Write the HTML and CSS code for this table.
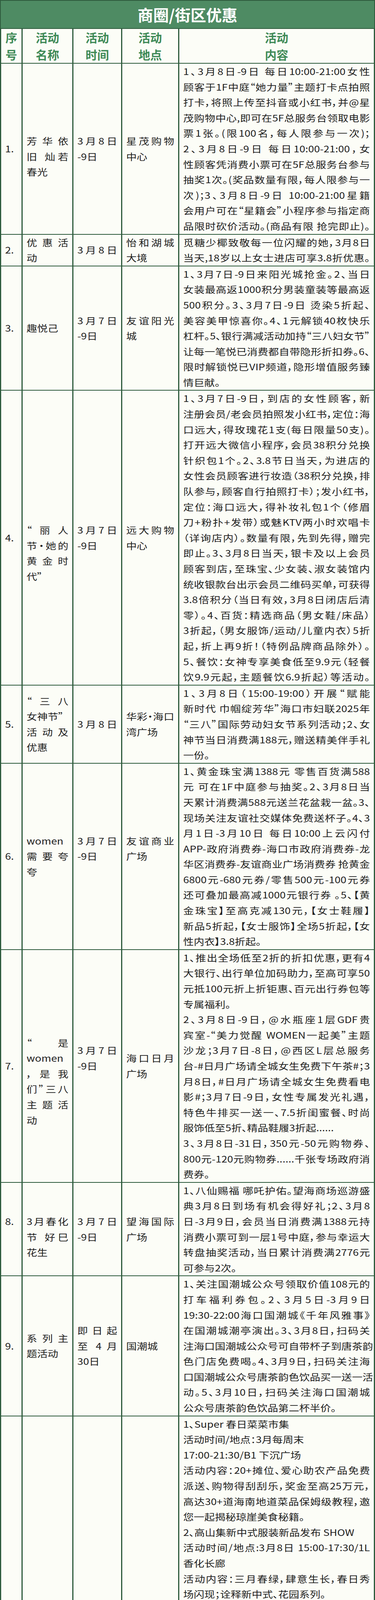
FILE: index.html
```html
<!DOCTYPE html>
<html lang="zh-CN">
<head>
<meta charset="utf-8">
<title>商圈/街区优惠</title>
<link rel="stylesheet" href="styles.css">
</head>
<body>
<div class="sheet">
  <div class="title">商圈/街区优惠</div>
  <table class="grid">
    <colgroup><col class="c-no"><col class="c-name"><col class="c-time"><col class="c-place"><col class="c-text"></colgroup>
    <thead>
      <tr><th>序<br>号</th><th>活动<br>名称</th><th>活动<br>时间</th><th>活动<br>地点</th><th>活动<br>内容</th></tr>
    </thead>
    <tbody>
      <tr>
        <td class="no"><span class="l">1.</span></td>
        <td class="pt1"><span class="l j">芳华依</span><span class="l j">旧 灿若</span><span class="l">春光</span></td>
        <td><span class="l j">3月8日</span><span class="l">-9日</span></td>
        <td><span class="l j">星茂购物</span><span class="l">中心</span></td>
        <td>
          <span class="l j">1、3月8日-9日 每日10:00-21:00女性</span>
          <span class="l j">顾客于1F中庭“她力量”主题打卡点拍照</span>
          <span class="l j">打卡，将照上传至抖音或小红书，并@星</span>
          <span class="l j">茂购物中心,即可在5F总服务台领取电影</span>
          <span class="l j">票1张。(限100名，每人限参与一次)；</span>
          <span class="l j">2、3月8日-9日 每日10:00-21:00，女</span>
          <span class="l j">性顾客凭消费小票可在5F总服务台参与</span>
          <span class="l j">抽奖1次。(奖品数量有限，每人限参与一</span>
          <span class="l j">次)；3、3月8日-9日 10:00-21:00星籍</span>
          <span class="l j">会用户可在“星籍会”小程序参与指定商</span>
          <span class="l j">品限时砍价活动。(商品有限 抢完即止)。</span>
        </td>
      </tr>
      <tr>
        <td class="no"><span class="l">2.</span></td>
        <td><span class="l j">优惠活</span><span class="l">动</span></td>
        <td><span class="l j">3月8日</span></td>
        <td><span class="l j">怡和湖城</span><span class="l">大境</span></td>
        <td>
          <span class="l j">觅糖少椰致敬每一位闪耀的她，3月8日</span>
          <span class="l j">当天,18岁以上女士进店可享3.8折优惠。</span>
        </td>
      </tr>
      <tr>
        <td class="no"><span class="l">3.</span></td>
        <td><span class="l">趣悦己</span></td>
        <td><span class="l j">3月7日</span><span class="l">-9日</span></td>
        <td><span class="l j">友谊阳光</span><span class="l">城</span></td>
        <td>
          <span class="l j">1、3月7日-9日来阳光城抢金。2、当日</span>
          <span class="l j">女装最高返1000积分男装童装等最高返</span>
          <span class="l j">500积分。3、3月7日-9日 烫染5折起、</span>
          <span class="l j">美容美甲惊喜你。4、1元解锁40枚快乐</span>
          <span class="l j">杠杆。5、银行满减活动加持“三八妇女节”</span>
          <span class="l j">让每一笔悦已消费都自带隐形折扣券。6、</span>
          <span class="l j">限时解锁悦已VIP频道，隐形增值服务臻</span>
          <span class="l">情巨献。</span>
        </td>
      </tr>
      <tr>
        <td class="no"><span class="l">4.</span></td>
        <td class="pt2"><span class="l j">“丽人</span><span class="l j">节·她的</span><span class="l j">黄金时</span><span class="l">代”</span></td>
        <td><span class="l j">3月7日</span><span class="l">-9日</span></td>
        <td><span class="l j">远大购物</span><span class="l">中心</span></td>
        <td>
          <span class="l j">1、3月7日-9日，到店的女性顾客，新</span>
          <span class="l j">注册会员/老会员拍照发小红书，定位：海</span>
          <span class="l j">口远大，得玫瑰花1支(每日限量50支)。</span>
          <span class="l j">打开远大微信小程序，会员38积分兑换</span>
          <span class="l j">针织包1个。2、3.8节日当天，为进店的</span>
          <span class="l j">女性会员顾客进行妆造（38积分兑换，排</span>
          <span class="l j">队参与，顾客自行拍照打卡）；发小红书，</span>
          <span class="l j">定位：海口远大，得补妆礼包1个（修眉</span>
          <span class="l j">刀+粉扑+发带）或魅KTV两小时欢唱卡</span>
          <span class="l j">（详询店内）。数量有限，先到先得，赠完</span>
          <span class="l j">即止。3、3月8日当天，银卡及以上会员</span>
          <span class="l j">顾客到店，至珠宝、少女装、淑女装馆内</span>
          <span class="l j">统收银款台出示会员二维码买单，可获得</span>
          <span class="l j">3.8倍积分（当日有效，3月8日闭店后清</span>
          <span class="l j">零）。4、百货：精选商品（男女鞋/床品）</span>
          <span class="l j">3折起，（男女服饰/运动/儿童内衣）5折</span>
          <span class="l j">起，折上再9折！（特例品牌商品除外）。</span>
          <span class="l j">5、餐饮：女神专享美食低至9.9元（轻餐</span>
          <span class="l j">饮9.9元起，主题餐饮6.9折起）等活动。</span>
        </td>
      </tr>
      <tr>
        <td class="no"><span class="l">5.</span></td>
        <td><span class="l j">“三八</span><span class="l">女神节”</span><span class="l j">活动及</span><span class="l">优惠</span></td>
        <td><span class="l j">3月8日</span></td>
        <td><span class="l j">华彩·海口</span><span class="l">湾广场</span></td>
        <td>
          <span class="l j">1、3月8日（15:00-19:00）开展“赋能</span>
          <span class="l j">新时代 巾帼绽芳华”海口市妇联2025年</span>
          <span class="l j">“三八”国际劳动妇女节系列活动；2、女</span>
          <span class="l j">神节当日消费满188元，赠送精美伴手礼</span>
          <span class="l">一份。</span>
        </td>
      </tr>
      <tr>
        <td class="no"><span class="l">6.</span></td>
        <td><span class="l">women</span><span class="l j">需要夸</span><span class="l">夸</span></td>
        <td class="pb1"><span class="l j">3月7日</span><span class="l">-9日</span></td>
        <td class="pb1"><span class="l j">友谊商业</span><span class="l">广场</span></td>
        <td>
          <span class="l j">1、黄金珠宝满1388元 零售百货满588</span>
          <span class="l j">元 可在1F中庭参与抽奖。2、3月8日当</span>
          <span class="l j">天累计消费满588元送兰花盆栽一盆。3、</span>
          <span class="l j">现场关注友谊社交媒体免费送杯子。4、3</span>
          <span class="l j">月1日-3月10日 每日10:00上云闪付</span>
          <span class="l j">APP-政府消费券-海口市政府消费券-龙</span>
          <span class="l j">华区消费券-友谊商业广场消费券 抢黄金</span>
          <span class="l j">6800元-680元券/零售500元-100元券</span>
          <span class="l j">还可叠加最高减1000元银行券 。5、【黄</span>
          <span class="l j">金珠宝】至高克减130元，【女士鞋履】</span>
          <span class="l j">新品5折起，【女士服饰】全场5折起，【女</span>
          <span class="l">性内衣】3.8折起。</span>
        </td>
      </tr>
      <tr>
        <td class="no"><span class="l">7.</span></td>
        <td class="pt2"><span class="l j">“是</span><span class="l">women</span><span class="l j">，是我</span><span class="l j">们”三八</span><span class="l j">主题活</span><span class="l">动</span></td>
        <td class="pb1"><span class="l j">3月7日</span><span class="l">-9日</span></td>
        <td><span class="l j">海口日月</span><span class="l">广场</span></td>
        <td>
          <span class="l j">1、推出全场低至2折的折扣优惠，更有4</span>
          <span class="l j">大银行、出行单位加码助力，至高可享50</span>
          <span class="l j">元抵100元折上折钜惠、百元出行券包等</span>
          <span class="l">专属福利。</span>
          <span class="l j">2、3月8日-9日，@水瓶座1层GDF贵</span>
          <span class="l j">宾室-“美力觉醒 WOMEN一起美”主题</span>
          <span class="l j">沙龙；3月7日-8日，@西区L层总服务</span>
          <span class="l j">台-#日月广场请全城女生免费下午茶#；3</span>
          <span class="l j">月8日，#日月广场请全城女生免费看电</span>
          <span class="l j">影#；3月7日-9日，女性专属发光礼遇，</span>
          <span class="l j">特色牛排买一送一、7.5折闺蜜餐、时尚</span>
          <span class="l">服饰低至5折、精品鞋履3折起......</span>
          <span class="l j">3、3月8日-31日，350元-50元购物券、</span>
          <span class="l j">800元-120元购物券......千张专场政府消</span>
          <span class="l">费券。</span>
        </td>
      </tr>
      <tr>
        <td class="no pb1"><span class="l">8.</span></td>
        <td class="pt1"><span class="l j">3月春化</span><span class="l j">节 好巳</span><span class="l">花生</span></td>
        <td><span class="l j">3月7日</span><span class="l">-9日</span></td>
        <td><span class="l j">望海国际</span><span class="l">广场</span></td>
        <td>
          <span class="l j">1、八仙赐福 哪吒护佑。望海商场巡游盛</span>
          <span class="l j">典3月8日到场有机会得好礼；2、3月8</span>
          <span class="l j">日-3月9日，会员当日消费满1388元持</span>
          <span class="l j">消费小票可到一层1号中庭，参与幸运大</span>
          <span class="l j">转盘抽奖活动，当日累计消费满2776元</span>
          <span class="l">可参与2次。</span>
        </td>
      </tr>
      <tr>
        <td class="no"><span class="l">9.</span></td>
        <td><span class="l j">系列主</span><span class="l">题活动</span></td>
        <td><span class="l j">即日起</span><span class="l j">至 4 月</span><span class="l">30日</span></td>
        <td><span class="l">国潮城</span></td>
        <td>
          <span class="l j">1、关注国潮城公众号领取价值108元的</span>
          <span class="l j">打车福利券包。2、3月5日-3月9日</span>
          <span class="l j">19:30-22:00海口国潮城《千年风雅事》</span>
          <span class="l j">在国潮城潮亭演出。3、3月8日，扫码关</span>
          <span class="l j">注海口国潮城公众号可自带杯子到唐茶韵</span>
          <span class="l j">色门店免费喝。4、3月9日，扫码关注海</span>
          <span class="l j">口国潮城公众号唐茶韵色饮品买一送一活</span>
          <span class="l j">动。5、3月10日，扫码关注海口国潮城</span>
          <span class="l">公众号唐茶韵色饮品第二杯半价。</span>
        </td>
      </tr>
      <tr>
        <td class="no"><span class="l">10.</span></td>
        <td><span class="l j">系列主</span><span class="l j">题活动</span><span class="l">及优惠</span></td>
        <td><span class="l j">3月5日</span><span class="l">-3月11</span><span class="l">日</span></td>
        <td><span class="l j">王府井海</span><span class="l">垦广场</span></td>
        <td>
          <span class="l">1、Super 春日菜菜市集</span>
          <span class="l">活动时间/地点：3月每周末</span>
          <span class="l">17:00-21:30/B1 下沉广场</span>
          <span class="l j">活动内容：20+摊位、爱心助农产品免费</span>
          <span class="l j">派送、购物得刮刮乐，奖金至高25万元，</span>
          <span class="l j">高达30+道海南地道菜品保姆级教程，邀</span>
          <span class="l">您一起揭秘琼崖美食秘籍。</span>
          <span class="l">2、高山集新中式服装新品发布 SHOW</span>
          <span class="l j">活动时间/地点:3月8日 15:00-17:30/1L</span>
          <span class="l">香化长廊</span>
          <span class="l j">活动内容：三月春绿，肆意生长，春日秀</span>
          <span class="l">场闪现；诠释新中式、花园系列。</span>
          <span class="l">3、Super 春日菜菜市集·音乐会</span>
          <span class="l">活动时间/地点：3月8日</span>
          <span class="l">19:30-21:30/B1 下沉广场</span>
          <span class="l j">活动内容：一场专属春天的音乐会，就在</span>
          <span class="l">这周六，唱一唱美好的春天！</span>
          <span class="l j">4、2025 第二十四届海口冼夫人文化节巾</span>
          <span class="l">帼主题巡游快闪活动</span>
          <span class="l">巡游时间：3月9日</span>
          <span class="l j">活动内容：3月5日-3 月11日期间凭东</span>
          <span class="l j">坡镇冼夫人纪念馆门票的游客，到王府井</span>
          <span class="l j">海垦广场一楼总服务台，注册会员可免费</span>
          <span class="l">领取鸭鸭手腕包一个 。</span>
          <span class="l j">5、国际美妆春日限定满减：即日起至3</span>
          <span class="l j">月9日，满1000元减 200 元；满2000</span>
          <span class="l">元减440元；满3000元减690元。</span>
          <span class="l">6、美力满赠活动</span>
          <span class="l">活动时间：3月1日-3 月9日</span>
          <span class="l j">活动内容：零售单笔消费实付满1688元</span>
          <span class="l j">送欧舒丹护手霜/欧舒丹润唇膏（2选1）。</span>
          <span class="l">*具体参与品牌详见店内。</span>
        </td>
      </tr>
      <tr>
        <td class="no"><span class="l">11.</span></td>
        <td><span class="l j">致敬</span><span class="l j">“她”力</span><span class="l j">量，3月</span><span class="l j">8日「花</span><span class="l j">花/手作/</span><span class="l j">美照」三</span><span class="l">连彩蛋</span></td>
        <td><span class="l j">3月8日</span></td>
        <td><span class="l j">恩祥生活</span><span class="l">广场</span></td>
        <td>
          <span class="l j">领毛绒小花，GET打卡拍照神器；享DIY</span>
          <span class="l j">体验，把春天扭进你心里；拍春日神图，</span>
          <span class="l">现场打印+贴纸装饰。</span>
          <span class="l">地址：海口市秀英区美林路5号</span>
          <span class="l">电话：0898-68610168</span>
        </td>
      </tr>
      <tr>
        <td class="no"><span class="l">12.</span></td>
        <td><span class="l j">主题活</span><span class="l">动</span></td>
        <td><span class="l j">3月8日</span><span class="l">-9日</span></td>
        <td><span class="l j">海口万达</span><span class="l">广场</span></td>
        <td>
          <span class="l j">活动一、3月8日-9日，1F连廊，首届脑</span>
          <span class="l j">力挑战赛；活动二、3月8日，一号门外</span>
          <span class="l j">广场，首届Chinajoy韩舞；活动三、3月</span>
          <span class="l j">8日-9日，1F连廊，首届萌宠游园会；活</span>
          <span class="l j">动四、3月8日-9日，1F连廊，春日FAFA</span>
          <span class="l j">艺术节；活动五、3月8日-9日，1F连廊，</span>
          <span class="l j">趣味魔方比赛；活动六、3月8日-9日，</span>
          <span class="l j">惊喜玩偶派对；活动七、3月8日-9日，</span>
          <span class="l j">1F连廊，粉丝线下联动；活动八、3月8</span>
          <span class="l j">日-9日，满188即可抽奖一次（内含万达</span>
          <span class="l">影城电影票/星巴克饮品券/霸王餐）。</span>
          <span class="l">地址：海口市秀英区海榆中线29号</span>
        </td>
      </tr>
      <tr>
        <td class="no"><span class="l">13.</span></td>
        <td><span class="l j">女神节</span><span class="l j">宠爱时</span><span class="l">刻</span></td>
        <td><span class="l j">3月5日</span><span class="l">-8日</span></td>
        <td><span class="l j">五源河西</span><span class="l">岸街区</span></td>
        <td>
          <span class="l j">1、度叁咖啡餐酒馆女神节宠爱时刻，3月</span>
          <span class="l j">5日-8日，到店消费的女神可免费领可颂</span>
          <span class="l">一份。</span>
          <span class="l">电话：13322069150</span>
        </td>
      </tr>
      <tr>
        <td class="no"><span class="l">14.</span></td>
        <td><span class="l j">女神节</span><span class="l j">特别企</span><span class="l">划活动</span></td>
        <td><span class="l j">3月8日</span><span class="l">-9日</span></td>
        <td><span class="l j">保利中央</span><span class="l j">海岸商业</span><span class="l j">街区-星空</span><span class="l j">之境·滨海</span><span class="l j">文化演绎</span><span class="l">中心</span></td>
        <td>
          <span class="l j">3月8日-9日晚22点，WWE坤拳摔角</span>
          <span class="l">之夜 热力开战！</span>
          <span class="l">地址：海口市秀英区丽晶路17号</span>
          <span class="l">电话：15308957078、15308958078</span>
        </td>
      </tr>
      <tr>
        <td class="no pb2"><span class="l">15.</span></td>
        <td><span class="l j">Women'</span><span class="l j">s Day</span><span class="l j">让花 自</span><span class="l">由盛开</span></td>
        <td class="pb2"><span class="l j">3月8日</span></td>
        <td class="pb2"><span class="l j">雅乐里商</span><span class="l">业街</span></td>
        <td>
          <span class="l j">1、春日造趣无所不集：每日17:00-22:00</span>
          <span class="l j">在雅乐里沿街(美园路)，与春天撞个满怀"</span>
          <span class="l">逛集市，漫游春日氛围一起海吃嗨购。</span>
          <span class="l j">2、春日致献 女神福利：爱自己是终身浪</span>
          <span class="l j">漫的事业，一起约惠美丽，迎接至美惊喜</span>
          <span class="l j">吧！即日起至3月10日，壹·普拉提超多</span>
          <span class="l">优惠等你来！</span>
          <span class="l">地址：雅乐里南区3F S-309</span>
        </td>
      </tr>
    </tbody>
  </table>
</div>
</body>
</html>
```

FILE: styles.css
```css
* {
  box-sizing: border-box;
}

html,
body {
  margin: 0;
  padding: 0;
}

body {
  background: #ffffff;
  font-family: "Noto Sans CJK SC", "Noto Sans", sans-serif;
  color: #1e1e1e;
}

.sheet {
  width: 960px;
}

.title {
  height: 72px;
  border: 2px solid #2e5b3d;
  border-bottom: 0;
  background: #4e8b63;
  color: #ffffff;
  font-size: 40px;
  font-weight: 700;
  line-height: 70px;
  text-align: center;
}

.grid {
  width: 957px;
  border-collapse: collapse;
  table-layout: fixed;
  background: #fcfdf7;
}

.c-no { width: 55px; }
.c-name { width: 130px; }
.c-time { width: 125px; }
.c-place { width: 146px; }
.c-text { width: 501px; }

.grid th,
.grid td {
  border-style: solid;
  border-color: #2e5b3d;
  border-width: 2px 3px;
}

.grid th {
  padding: 0;
  font-size: 30px;
  font-weight: 700;
  line-height: 43.5px;
  color: #3f8a57;
  text-align: center;
  vertical-align: middle;
}

.grid td {
  padding: 0 10px;
  font-size: 27px;
  line-height: 39.6px;
  vertical-align: middle;
  text-align: left;
  font-feature-settings: "palt";
}

.grid td.no {
  padding: 0 0 0 10px;
}

.grid td.pt1 { padding-top: 39.6px; }
.grid td.pt2 { padding-top: 79.2px; }
.grid td.pb1 { padding-bottom: 39.6px; }
.grid td.pb2 { padding-bottom: 70px; }

.l {
  display: block;
  white-space: nowrap;
  transform: scaleY(0.85);
}

.j {
  text-align: justify;
  text-align-last: justify;
}
```
